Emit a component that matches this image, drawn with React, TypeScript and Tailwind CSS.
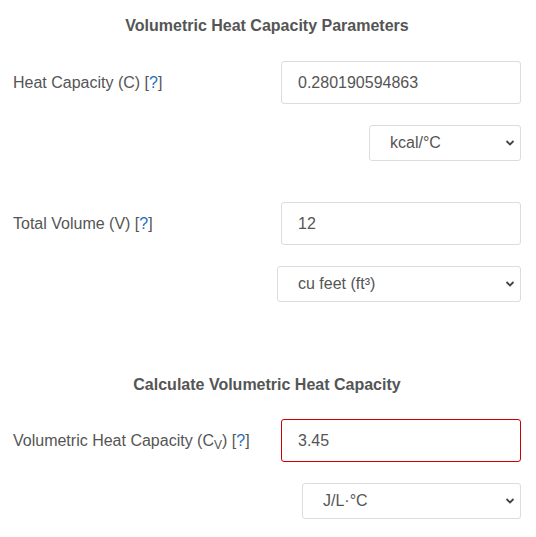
import React from 'react';

const Help = () => <span>[<span className="text-[#1a6fc4]">?</span>]</span>;

const Chevron = () => (
  <svg
    className="pointer-events-none absolute right-[6px] top-1/2 -translate-y-1/2"
    width="10"
    height="7"
    viewBox="0 0 10 7"
  >
    <path d="M1.5 1.5 L5 5 L8.5 1.5" fill="none" stroke="#444" strokeWidth="1.8" />
  </svg>
);

interface UnitSelectProps {
  value: string;
  width: string;
  red?: boolean;
}

const UnitSelect: React.FC<UnitSelectProps> = ({ value, width }) => (
  <div className={`relative ${width}`}>
    <select
      defaultValue={value}
      className="h-[36px] w-full appearance-none rounded-[3px] border border-[#dcdcdc] bg-white pl-[20px] text-[16px] text-[#555] outline-none"
    >
      <option>{value}</option>
    </select>
    <Chevron />
  </div>
);

interface FieldProps {
  label: React.ReactNode;
  value: string;
  unit: string;
  unitWidth: string;
  error?: boolean;
}

const Field: React.FC<FieldProps> = ({ label, value, unit, unitWidth, error }) => (
  <div>
    <div className="flex items-center justify-between">
      <label className="text-[16px] text-[#555]">{label}</label>
      <input
        defaultValue={value}
        className={`h-[43px] w-[240px] rounded-[3px] border bg-white pl-[16px] text-[16px] text-[#555] outline-none ${
          error ? 'border-[#cc0000]' : 'border-[#dcdcdc]'
        }`}
      />
    </div>
    <div className="mt-[21px] flex justify-end">
      <UnitSelect value={unit} width={unitWidth} />
    </div>
  </div>
);

export default function App() {
  return (
    <div className="h-[537px] w-[536px] bg-white pl-[13px] pr-[15px] pt-[16px] font-['Liberation_Sans',Arial,sans-serif]">
      {/* Parameters */}
      <h3 className="text-center text-[16px] leading-[20px] font-bold text-[#555]">
        Volumetric Heat Capacity Parameters
      </h3>
      <div className="mt-[25px]">
        <Field
          label={<>Heat Capacity (C) <Help /></>}
          value="0.280190594863"
          unit="kcal/°C"
          unitWidth="w-[152px]"
        />
      </div>
      <div className="mt-[41px]">
        <Field
          label={<>Total Volume (V) <Help /></>}
          value="12"
          unit="cu feet (ft³)"
          unitWidth="w-[244px]"
        />
      </div>

      {/* Result */}
      <h3 className="mt-[73px] text-center text-[16px] leading-[20px] font-bold text-[#555]">
        Calculate Volumetric Heat Capacity
      </h3>
      <div className="mt-[24px]">
        <Field
          label={
            <>
              Volumetric Heat Capacity (C<sub className="text-[12px]">V</sub>) <Help />
            </>
          }
          value="3.45"
          unit="J/L·°C"
          unitWidth="w-[219px]"
          error
        />
      </div>
    </div>
  );
}
